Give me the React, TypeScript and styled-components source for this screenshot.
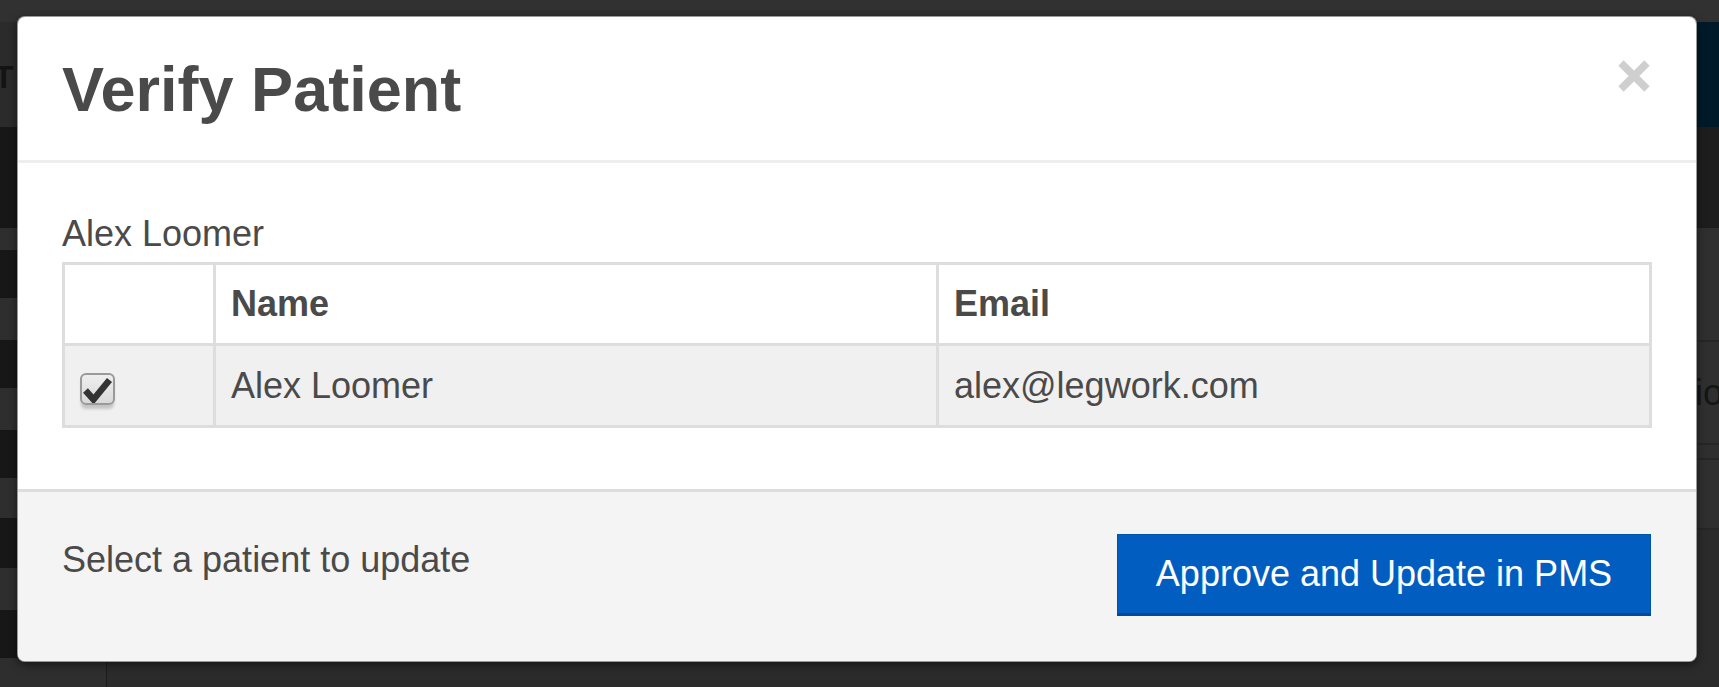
import React from "react";
import styled, { createGlobalStyle } from "styled-components";

const GlobalStyle = createGlobalStyle`
  html, body {
    margin: 0;
    padding: 0;
    background: #2d2d2d;
  }
  body {
    font-family: "Liberation Sans", Arial, sans-serif;
    overflow: hidden;
  }
  * {
    box-sizing: border-box;
  }
`;

/* ---------- dimmed application behind the dialog ---------- */

const Screen = styled.div`
  position: relative;
  width: 1719px;
  height: 687px;
  overflow: hidden;
  display: flex;
  flex-direction: column;
  background: #2d2d2d;
`;

const TopStrip = styled.div`
  flex: none;
  height: 22px;
  background: #313131;
`;

const HeaderBar = styled.div`
  flex: none;
  display: grid;
  grid-template-columns: 107px 1fr;
  height: 105px;
`;

const Brand = styled.div`
  background: #2b2b2b;
  color: #141414;
  font: 700 32px/1 "Liberation Sans", Arial, sans-serif;
  padding-top: 39px;
  white-space: nowrap;
  overflow: hidden;
  span {
    display: inline-block;
    margin-left: -6px;
  }
`;

const NavBar = styled.div`
  background: #001a2a;
`;

const Workspace = styled.div`
  flex: 1;
  display: grid;
  grid-template-columns: 107px 1fr;
  min-height: 0;
`;

const Sidebar = styled.div`
  display: flex;
  flex-direction: column;
  border-right: 1px solid #1c1c1c;
  background: #2f2f2f;
`;

const SideRow = styled.div<{ $h: number; $dark?: boolean }>`
  flex: none;
  height: ${(p) => p.$h}px;
  background: ${(p) => (p.$dark ? "#171717" : "#2e2e2e")};
`;

const MainArea = styled.div`
  display: flex;
  flex-direction: column;
  background: #2b2b2b;
`;

const Band = styled.div`
  flex: none;
  height: 101px;
  background: #1d1d1d;
`;

const ListRow = styled.div<{ $h: number }>`
  flex: none;
  height: ${(p) => p.$h}px;
  display: grid;
  grid-template-columns: 1460px 1fr;
  align-items: center;
  background: #2f2f2f;
  border-bottom: 2px solid #262626;
  color: #151515;
  font: 36px/1 "Liberation Sans", Arial, sans-serif;
  white-space: nowrap;
  overflow: hidden;
`;

/* ---------- dialog ---------- */

const Dialog = styled.div`
  position: absolute;
  left: 17px;
  top: 16px;
  width: 1680px;
  height: 646px;
  display: flex;
  flex-direction: column;
  background: #ffffff;
  border: 1px solid rgba(0, 0, 0, 0.4);
  border-radius: 8px;
  box-shadow: 0 3px 9px rgba(0, 0, 0, 0.5);
  overflow: hidden;
  color: #4a4a4a;
`;

const DialogHeader = styled.div`
  flex: none;
  display: flex;
  justify-content: space-between;
  align-items: flex-start;
  padding: 38px 45px 37px 44px;
  border-bottom: 3px solid #eeeeee;
`;

const Title = styled.h4`
  margin: 0;
  font: 700 63px/68px "Liberation Sans", Arial, sans-serif;
  color: #4a4a4a;
`;

const CloseButton = styled.button`
  width: 32px;
  height: 32px;
  margin: 5px 1px 0 0;
  padding: 0;
  border: 0;
  background: transparent;
  cursor: pointer;
  display: block;
  svg {
    display: block;
  }
`;

const DialogBody = styled.div`
  flex: none;
  padding: 45px 45px 61px 44px;
`;

const PatientLabel = styled.div`
  font: 36px/51px "Liberation Sans", Arial, sans-serif;
  margin-bottom: 3px;
`;

const Table = styled.table`
  width: 1590px;
  table-layout: fixed;
  border-collapse: separate;
  border-spacing: 0;
  border-top: 3px solid #dddddd;
  border-left: 3px solid #dddddd;
`;

const Cell = styled.td<{ $w: number }>`
  width: ${(p) => p.$w}px;
  padding: 0 15px;
  border-right: 3px solid #dddddd;
  border-bottom: 3px solid #dddddd;
  vertical-align: middle;
  text-align: left;
  font: 36px "Liberation Sans", Arial, sans-serif;
  color: #4a4a4a;
`;

const HeadCell = styled(Cell).attrs({ as: "th" })`
  height: 81px;
  font-weight: 700;
  background: #ffffff;
`;

const BodyCell = styled(Cell)`
  height: 82px;
  background: #f0f0f0;
`;

const CheckBox = styled.span`
  display: block;
  width: 35px;
  height: 32px;
  margin: 7px 0 0 0;
  border: 2px solid #9a9a9a;
  border-radius: 6px;
  background: linear-gradient(#eeeeee, #d9d9d9);
  box-shadow: 0 5px 3px -1px rgba(0, 0, 0, 0.18);
  svg {
    display: block;
  }
`;

const DialogFooter = styled.div`
  flex: 1;
  display: flex;
  justify-content: space-between;
  align-items: flex-start;
  padding: 42px 45px 45px 44px;
  border-top: 3px solid #dddddd;
  background: #f4f4f4;
`;

const Hint = styled.div`
  font: 36px/51px "Liberation Sans", Arial, sans-serif;
  color: #4a4a4a;
`;

const PrimaryButton = styled.button`
  width: 534px;
  height: 82px;
  padding: 0;
  background: #015ec0;
  color: #ffffff;
  font: 36px "Liberation Sans", Arial, sans-serif;
  border: 1px solid #0053aa;
  border-bottom: 3px solid #004a98;
  border-radius: 0;
  cursor: pointer;
`;

const sideRows: Array<[number, boolean]> = [
  [101, true],
  [22, false],
  [48, true],
  [42, false],
  [48, true],
  [42, false],
  [48, true],
  [40, false],
  [50, true],
  [42, false],
  [48, true],
  [60, false],
];

export default function App() {
  return (
    <>
      <GlobalStyle />
      <Screen>
        <TopStrip />
        <HeaderBar>
          <Brand>
            <span>T</span>
          </Brand>
          <NavBar />
        </HeaderBar>
        <Workspace>
          <Sidebar>
            {sideRows.map(([h, dark], i) => (
              <SideRow key={i} $h={h} $dark={dark} />
            ))}
          </Sidebar>
          <MainArea>
            <Band />
            <ListRow $h={114} />
            <ListRow $h={103}>
              <span />
              <span>Verification</span>
            </ListRow>
            <ListRow $h={15} />
            <ListRow $h={70} />
          </MainArea>
        </Workspace>

        <Dialog role="dialog" aria-labelledby="verify-title">
          <DialogHeader>
            <Title id="verify-title">Verify Patient</Title>
            <CloseButton aria-label="Close">
              <svg width="32" height="32" viewBox="0 0 32 32">
                <path
                  d="M3 3 L29 29 M29 3 L3 29"
                  stroke="#cfcfcf"
                  strokeWidth="7.5"
                  strokeLinecap="butt"
                />
              </svg>
            </CloseButton>
          </DialogHeader>

          <DialogBody>
            <PatientLabel>Alex Loomer</PatientLabel>
            <Table>
              <thead>
                <tr>
                  <HeadCell $w={151} />
                  <HeadCell $w={723}>Name</HeadCell>
                  <HeadCell $w={713}>Email</HeadCell>
                </tr>
              </thead>
              <tbody>
                <tr>
                  <BodyCell $w={151}>
                    <CheckBox role="checkbox" aria-checked="true">
                      <svg width="31" height="28" viewBox="0 0 31 28">
                        <path
                          d="M3.5 15.5 L11.5 24.5 L27.5 5"
                          fill="none"
                          stroke="#333333"
                          strokeWidth="6.5"
                        />
                      </svg>
                    </CheckBox>
                  </BodyCell>
                  <BodyCell $w={723}>Alex Loomer</BodyCell>
                  <BodyCell $w={713}>alex@legwork.com</BodyCell>
                </tr>
              </tbody>
            </Table>
          </DialogBody>

          <DialogFooter>
            <Hint>Select a patient to update</Hint>
            <PrimaryButton>Approve and Update in PMS</PrimaryButton>
          </DialogFooter>
        </Dialog>
      </Screen>
    </>
  );
}
